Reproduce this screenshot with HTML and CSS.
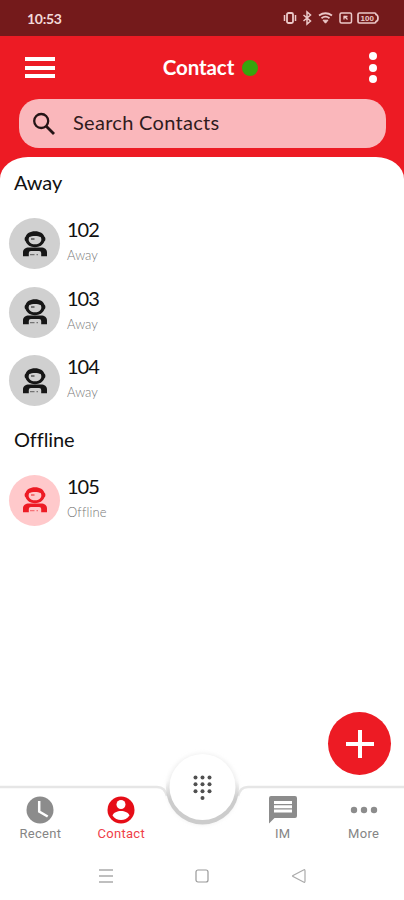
FILE: index.html
```html
<!DOCTYPE html>
<html lang="en">
<head>
	<meta charset="utf-8">
	<title>Contact</title>
	<link rel="stylesheet" href="styles.css">
</head>
<body>
<svg width="0" height="0" class="defs">
	<symbol id="person" viewBox="0 0 26 26">
		<path fill-rule="evenodd" d="M13 .3c5 0 8.500 2.300 9.300 5.200 1.500.8 1.500 4.200 0 5-1.200 3.500-4.800 5.700-9.300 5.700s-8.100-2.200-9.300-5.700c-1.500-.8-1.500-4.200 0-5C4.500 2.600 8 .3 13 .3zM7.300 6c-2 3.800.7 7.300 5.700 7.300s7.700-3.500 5.700-7.300c-2.500-1.500-8.900-1.500-11.400 0z"/>
		<path fill-rule="evenodd" d="M1 25.300v-3.800c0-3.300 2.500-5 6-5h12c3.500 0 6 1.700 6 5v3.800h-5.800V22q0-2-2-2H8.800q-2 0-2 2v3.300z"/>
		<path d="M9 7h3.500v2H9zM8 23h4.500v1.300H8zM14.500 23h1.500v1.300h-1.500z" opacity=".5"/>
	</symbol>
</svg>
<div class="status">
	<span class="clock">10:53</span>
	<svg class="sysicons" width="98" height="16" viewBox="0 0 98 16" fill="none" stroke="#ecc9c9" stroke-width="1.500">
		<rect x="5" y="3" width="6" height="10" rx="1.500" stroke-width="1.800"/>
		<path d="M2.500 5v6M13.500 5v6"/>
		<path d="M21.500 5l7 6-3.500 3V2l3.500 3-7 6"/>
		<path d="M37 5.500q6.500-4.500 13 0M39.500 8.200q4-3 8 0" stroke-width="1.800"/>
		<path d="M41 10.200h5l-2.500 3z" fill="#ecc9c9" stroke-width="1"/>
		<rect x="58" y="3" width="11.500" height="10" rx="1.500"/>
		<path d="M62 6l3.500 3.500M62 9.500V6.500h3.500" stroke-width="1.300"/>
		<path d="M77.500 3h15q1.500 0 1.500 1.500 2 .5 2 3.500t-2 3.500q0 1.500-1.500 1.500h-15q-1.500 0-1.500-1.500v-7q0-1.500 1.500-1.500z" stroke-width="1.700"/>
		<text x="78.500" y="11" class="batt">100</text>
	</svg>
</div>
<div class="header">
	<div class="bar">
		<div class="burger"><i></i><i></i><i></i></div>
		<div class="title"><span class="label">Contact</span><span class="online"></span></div>
		<div class="dots"><i></i><i></i><i></i></div>
	</div>
	<div class="search">
		<svg width="24" height="24" viewBox="0 0 24 24" fill="none" stroke="#241416" stroke-width="2.300"><circle cx="9.200" cy="9" r="7"/><path d="M14 14l8 8" stroke-width="2.800"/></svg>
		<span>Search Contacts</span>
	</div>
</div>
<div class="sheet">
	<h2>Away</h2>
	<ul class="list">
		<li>
			<div class="avatar"><svg><use href="#person"/></svg></div>
			<div class="info"><p class="name">102</p><p class="state">Away</p></div>
		</li>
		<li>
			<div class="avatar"><svg><use href="#person"/></svg></div>
			<div class="info"><p class="name">103</p><p class="state">Away</p></div>
		</li>
		<li>
			<div class="avatar"><svg><use href="#person"/></svg></div>
			<div class="info"><p class="name">104</p><p class="state">Away</p></div>
		</li>
	</ul>
	<h2 class="off">Offline</h2>
	<ul class="list">
		<li>
			<div class="avatar red"><svg><use href="#person"/></svg></div>
			<div class="info"><p class="name">105</p><p class="state wide">Offline</p></div>
		</li>
	</ul>
	<div class="add"><svg width="28" height="28" viewBox="0 0 28 28"><path d="M14 0v28M0 14h28" stroke="#fff" stroke-width="4"/></svg></div>
</div>
<div class="tabs">
	<svg class="edge" width="404" height="86" viewBox="0 0 404 86">
		<defs>
			<filter id="soft" x="-30%" y="-30%" width="160%" height="160%"><feGaussianBlur stdDeviation="2"/></filter>
			<linearGradient id="fade" x1="0" y1="0" x2="0" y2="1">
				<stop offset=".4" stop-color="#ccc" stop-opacity="0"/>
				<stop offset=".65" stop-color="#ccc"/>
			</linearGradient>
		</defs>
		<path d="M0 37h157c6 0 8 3 10 9M404 37H248c-6 0-8 3-10 9" fill="none" stroke="#e6e6e6" stroke-width="2.500"/>
		<circle cx="202.500" cy="39" r="35.500" fill="#ddd" opacity=".5" filter="url(#soft)"/>
		<circle cx="202.500" cy="38" r="36.500" fill="url(#fade)"/>
		<circle cx="202.500" cy="37" r="33" fill="#fff"/>
		<g fill="#505050">
			<circle cx="195.500" cy="27.500" r="2"/><circle cx="202.500" cy="27.500" r="2"/><circle cx="209.500" cy="27.500" r="2"/>
			<circle cx="195.500" cy="34.300" r="2"/><circle cx="202.500" cy="34.300" r="2"/><circle cx="209.500" cy="34.300" r="2"/>
			<circle cx="195.500" cy="41.200" r="2"/><circle cx="202.500" cy="41.200" r="2"/><circle cx="209.500" cy="41.200" r="2"/>
			<circle cx="202.500" cy="48" r="2"/>
		</g>
	</svg>
	<div class="tab">
		<svg width="28" height="28" viewBox="0 0 28 28"><circle cx="14" cy="14" r="13.500" fill="#8c8c8c"/><path d="M13.200 5v10.500l8.500 5" fill="none" stroke="#fff" stroke-width="2.500"/></svg>
		<span>Recent</span>
	</div>
	<div class="tab active">
		<svg width="28" height="28" viewBox="0 0 28 28"><circle cx="14" cy="14" r="13.500" fill="#e60d17"/><circle cx="14" cy="8.500" r="4.500" fill="#fff"/><path d="M5.500 19.500c2-6 15-6 17 0-4 6-13 6-17 0z" fill="#fff"/></svg>
		<span>Contact</span>
	</div>
	<div class="tab"></div>
	<div class="tab">
		<svg width="28" height="28" viewBox="0 0 28 28"><path d="M2 0h24q2 0 2 2v18q0 2-2 2H5.500L0 27.500V2q0-2 2-2z" fill="#8c8c8c"/><path d="M5 6.500h18M5 10.700h18M5 14.900h18" stroke="#fff" stroke-width="3"/></svg>
		<span>IM</span>
	</div>
	<div class="tab">
		<svg width="28" height="28" viewBox="0 0 28 28" fill="#8c8c8c"><circle cx="4" cy="14" r="3.200"/><circle cx="14" cy="14" r="3.200"/><circle cx="24" cy="14" r="3.200"/></svg>
		<span>More</span>
	</div>
</div>
<div class="sysnav">
	<svg width="14" height="16" viewBox="0 0 14 16" stroke="#aaa" stroke-width="1.300"><path d="M0 2h14M0 8h14M0 14h14"/></svg>
	<svg width="14" height="16" viewBox="0 0 14 16" fill="none" stroke="#999" stroke-width="1.200"><rect x="1" y="2" width="12" height="12" rx="2"/></svg>
	<svg width="15" height="16" viewBox="0 0 15 16" fill="none" stroke="#aaa" stroke-width="1.200"><path d="M12.500 2q1.500-1 1.500 1v10q0 2-1.500 1L2 8.500q-1-.5 0-1z"/></svg>
</div>
</body>
</html>
```

FILE: styles.css
```css
* {box-sizing:border-box;}
body,h2,ul,p {margin:0;padding:0;}
body {width:404px;height:900px;display:flex;flex-direction:column;background:#fff;overflow:hidden;
	font-family:Lato, "Open Sans", sans-serif;color:#111;}
svg {display:block;overflow:visible;}
.defs {position:absolute;}
li {list-style:none;}
i {display:block;background:#fff;}

.status {height:36px;flex:none;background:#741a1b;display:flex;justify-content:space-between;align-items:center;padding:0 24px 0 27px;}
.clock {font-size:14px;font-weight:bold;color:#f2d9d9;letter-spacing:-.3px;}
.batt {font:bold 8px "Liberation Sans", sans-serif;fill:#ecc9c9;stroke:none;}

.header {height:144px;flex:none;background:#ed1b24;padding:0 18px 0 19px;}
.bar {height:63px;display:flex;justify-content:space-between;align-items:center;padding:0 9px 0 6px;}
.burger {width:30px;display:flex;flex-direction:column;gap:4.500px;}
.burger i {height:4px;}
.title {display:flex;align-items:center;gap:8px;color:#fff;font-size:20.500px;line-height:24px;font-weight:bold;letter-spacing:-.1px;margin-right:3px;}
.label {padding-bottom:2px;}
.online {width:16px;height:16px;border-radius:50%;background:#37a50d;}
.dots {display:flex;flex-direction:column;gap:3.500px;}
.dots i {width:8px;height:8px;border-radius:50%;}
.search {height:49px;border-radius:20px;background:#fab7bb;display:flex;align-items:center;gap:17px;padding-left:13px;font-size:20px;letter-spacing:.3px;color:#301b1d;}
.search span {padding-bottom:3px;}

.sheet {position:relative;height:593px;flex:none;margin-top:-23px;background:#fff;border-radius:28px 28px 0 0 / 22px 22px 0 0;padding-top:12px;}
h2 {font-size:20px;line-height:26px;font-weight:normal;padding-left:14px;letter-spacing:-.1px;}
.off {margin-top:11px;}
.list {padding-top:14px;}
.list li {height:68.500px;display:flex;gap:7px;padding:9px 0 0 9px;}
.avatar {width:51px;height:51px;border-radius:50%;background:#d0d0d0;fill:#161616;display:flex;align-items:center;justify-content:center;}
.avatar svg {width:26px;height:26px;}
.red {background:#ffc9cb;fill:#ed1b24;}
.info {margin-top:-1px;}
.name {font-size:20px;line-height:24px;letter-spacing:-1px;}
.state {font-size:13px;line-height:18px;margin-top:5px;color:#777;font-weight:300;}
.wide {letter-spacing:.1px;}
.add {position:absolute;left:328px;top:555px;width:63px;height:63px;border-radius:50%;background:#ed1b24;display:flex;align-items:center;justify-content:center;z-index:2;}

.tabs {position:relative;height:101px;flex:none;display:grid;grid-template-columns:repeat(5, 1fr);padding-top:46px;}
.edge {position:absolute;left:0;top:0;}
.tab {display:flex;flex-direction:column;align-items:center;gap:1px;font-family:Roboto, sans-serif;font-size:13px;line-height:18px;letter-spacing:.3px;color:#858585;}
.active {color:#ef4048;}
.sysnav {height:49px;flex:none;display:flex;justify-content:center;align-items:center;gap:82px;}
```
